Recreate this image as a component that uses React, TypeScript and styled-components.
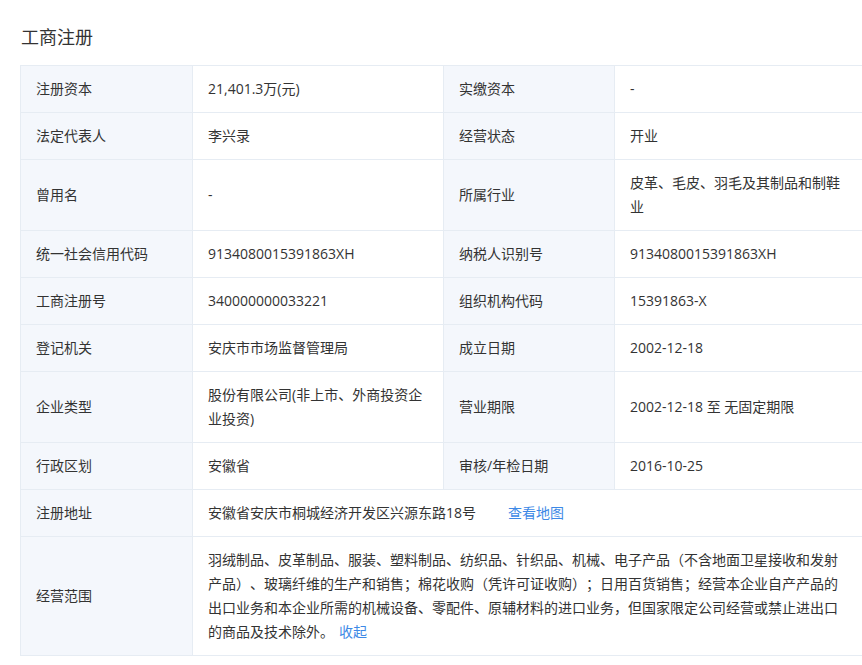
import React from "react";
import styled, { createGlobalStyle } from "styled-components";

const Global = createGlobalStyle`
  html, body { margin: 0; padding: 0; overflow: hidden; background: #fff; }
  body { font-family: "Open Sans", "Noto Sans CJK SC", sans-serif; color: #333; }
`;

const Page = styled.div`
  padding: 24px 0 0 20px;
  width: 864px;
`;

const Title = styled.h2`
  margin: 0 0 15px 1px;
  font-size: 18px;
  line-height: 26px;
  font-weight: 400;
  color: #333;
`;

const Table = styled.table`
  width: 844px;
  border-collapse: collapse;
  table-layout: fixed;
  font-size: 14px;
  line-height: 24px;
  text-spacing-trim: space-all;
`;

const Cell = styled.td`
  border: 1px solid #e6ecf3;
  padding: 11px 15px;
  vertical-align: middle;
  word-break: break-all;
  text-spacing-trim: space-all;
`;

const Label = styled(Cell)`
  background: #f4f7fc;
  color: #333;
`;

const Value = styled(Cell)`
  background: #fff;
  color: #333;
`;

const Link = styled.a<{ $gap: number }>`
  color: #3d89e6;
  text-decoration: none;
  margin-left: ${(p) => p.$gap}px;
  cursor: pointer;
`;

const rows: [string, string, string, string][] = [
  ["注册资本", "21,401.3万(元)", "实缴资本", "-"],
  ["法定代表人", "李兴录", "经营状态", "开业"],
  ["曾用名", "-", "所属行业", "皮革、毛皮、羽毛及其制品和制鞋业"],
  ["统一社会信用代码", "9134080015391863XH", "纳税人识别号", "9134080015391863XH"],
  ["工商注册号", "340000000033221", "组织机构代码", "15391863-X"],
  ["登记机关", "安庆市市场监督管理局", "成立日期", "2002-12-18"],
  ["企业类型", "股份有限公司(非上市、外商投资企业投资)", "营业期限", "2002-12-18 至 无固定期限"],
  ["行政区划", "安徽省", "审核/年检日期", "2016-10-25"],
];

export default function App() {
  return (
    <Page>
      <Global />
      <Title>工商注册</Title>
      <Table>
        <colgroup>
          <col style={{ width: 172 }} />
          <col style={{ width: 251 }} />
          <col style={{ width: 171 }} />
          <col />
        </colgroup>
        <tbody>
          {rows.map((r) => (
            <tr key={r[0]}>
              <Label>{r[0]}</Label>
              <Value>{r[1]}</Value>
              <Label>{r[2]}</Label>
              <Value>{r[3]}</Value>
            </tr>
          ))}
          <tr>
            <Label>注册地址</Label>
            <Value colSpan={3}>
              安徽省安庆市桐城经济开发区兴源东路18号
              <Link $gap={32}>查看地图</Link>
            </Value>
          </tr>
          <tr>
            <Label>经营范围</Label>
            <Value colSpan={3}>
              羽绒制品、皮革制品、服装、塑料制品、纺织品、针织品、机械、电子产品（不含地面卫星接收和发射产品）、玻璃纤维的生产和销售；棉花收购（凭许可证收购）；日用百货销售；经营本企业自产产品的出口业务和本企业所需的机械设备、零配件、原辅材料的进口业务，但国家限定公司经营或禁止进出口的商品及技术除外。
              <Link $gap={5}>收起</Link>
            </Value>
          </tr>
        </tbody>
      </Table>
    </Page>
  );
}
